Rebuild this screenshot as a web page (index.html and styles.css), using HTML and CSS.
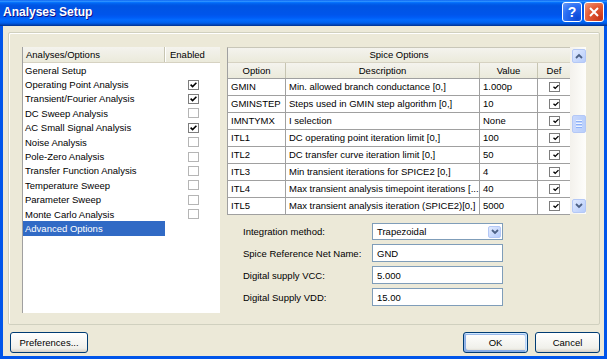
FILE: index.html
```html
<!DOCTYPE html>
<html>
<head>
    <meta charset="utf-8">
    <title>Analyses Setup</title>
    <link rel="stylesheet" href="styles.css">
</head>
<body>
<div class="window">
    <div class="titlebar">
        <span class="title">Analyses Setup</span>
        <div class="title-buttons">
            <span class="tbtn help">?</span>
            <span class="tbtn close">
                <svg width="10" height="10" viewBox="0 0 10 10"><path d="M1 1 L9 9 M9 1 L1 9" stroke="#fff" stroke-width="2" fill="none"/></svg>
            </span>
        </div>
    </div>

    <div class="body">
        <div class="group">
            <div class="list">
                <div class="list-head">
                    <span class="name">Analyses/Options</span>
                    <span class="enabled">Enabled</span>
                </div>
                <div class="list-row"><span class="name">General Setup</span><span class="enabled"></span></div>
                <div class="list-row"><span class="name">Operating Point Analysis</span><span class="enabled"><span class="cb on"><svg width="7" height="6" viewBox="0 0 7 6"><path d="M0.6 2.6 L2.6 4.6 L6.4 0.8" stroke="#000" stroke-width="1.6" fill="none"/></svg></span></span></div>
                <div class="list-row"><span class="name">Transient/Fourier Analysis</span><span class="enabled"><span class="cb on"><svg width="7" height="6" viewBox="0 0 7 6"><path d="M0.6 2.6 L2.6 4.6 L6.4 0.8" stroke="#000" stroke-width="1.6" fill="none"/></svg></span></span></div>
                <div class="list-row"><span class="name">DC Sweep Analysis</span><span class="enabled"><span class="cb"></span></span></div>
                <div class="list-row"><span class="name">AC Small Signal Analysis</span><span class="enabled"><span class="cb on"><svg width="7" height="6" viewBox="0 0 7 6"><path d="M0.6 2.6 L2.6 4.6 L6.4 0.8" stroke="#000" stroke-width="1.6" fill="none"/></svg></span></span></div>
                <div class="list-row"><span class="name">Noise Analysis</span><span class="enabled"><span class="cb"></span></span></div>
                <div class="list-row"><span class="name">Pole-Zero Analysis</span><span class="enabled"><span class="cb"></span></span></div>
                <div class="list-row"><span class="name">Transfer Function Analysis</span><span class="enabled"><span class="cb"></span></span></div>
                <div class="list-row"><span class="name">Temperature Sweep</span><span class="enabled"><span class="cb"></span></span></div>
                <div class="list-row"><span class="name">Parameter Sweep</span><span class="enabled"><span class="cb"></span></span></div>
                <div class="list-row"><span class="name">Monte Carlo Analysis</span><span class="enabled"><span class="cb"></span></span></div>
                <div class="list-row selected"><span class="name">Advanced Options</span><span class="enabled"></span></div>
            </div>

            <div class="right">
                <div class="grid-wrap">
                    <div class="grid">
                        <div class="grid-title">Spice Options</div>
                        <div class="grid-head">
                            <span class="c-opt">Option</span>
                            <span class="c-desc">Description</span>
                            <span class="c-val">Value</span>
                            <span class="c-def">Def</span>
                        </div>
                        <div class="grid-row">
                            <span class="c-opt">GMIN</span>
                            <span class="c-desc">Min. allowed branch conductance [0,]</span>
                            <span class="c-val">1.000p</span>
                            <span class="c-def"><span class="cb on"><svg width="7" height="6" viewBox="0 0 7 6"><path d="M0.6 2.6 L2.6 4.6 L6.4 0.8" stroke="#000" stroke-width="1.6" fill="none"/></svg></span></span>
                        </div>
                        <div class="grid-row">
                            <span class="c-opt">GMINSTEP</span>
                            <span class="c-desc">Steps used in GMIN step algorithm [0,]</span>
                            <span class="c-val">10</span>
                            <span class="c-def"><span class="cb on"><svg width="7" height="6" viewBox="0 0 7 6"><path d="M0.6 2.6 L2.6 4.6 L6.4 0.8" stroke="#000" stroke-width="1.6" fill="none"/></svg></span></span>
                        </div>
                        <div class="grid-row">
                            <span class="c-opt">IMNTYMX</span>
                            <span class="c-desc">I selection</span>
                            <span class="c-val">None</span>
                            <span class="c-def"><span class="cb on"><svg width="7" height="6" viewBox="0 0 7 6"><path d="M0.6 2.6 L2.6 4.6 L6.4 0.8" stroke="#000" stroke-width="1.6" fill="none"/></svg></span></span>
                        </div>
                        <div class="grid-row">
                            <span class="c-opt">ITL1</span>
                            <span class="c-desc">DC operating point iteration limit [0,]</span>
                            <span class="c-val">100</span>
                            <span class="c-def"><span class="cb on"><svg width="7" height="6" viewBox="0 0 7 6"><path d="M0.6 2.6 L2.6 4.6 L6.4 0.8" stroke="#000" stroke-width="1.6" fill="none"/></svg></span></span>
                        </div>
                        <div class="grid-row">
                            <span class="c-opt">ITL2</span>
                            <span class="c-desc">DC transfer curve iteration limit [0,]</span>
                            <span class="c-val">50</span>
                            <span class="c-def"><span class="cb on"><svg width="7" height="6" viewBox="0 0 7 6"><path d="M0.6 2.6 L2.6 4.6 L6.4 0.8" stroke="#000" stroke-width="1.6" fill="none"/></svg></span></span>
                        </div>
                        <div class="grid-row">
                            <span class="c-opt">ITL3</span>
                            <span class="c-desc">Min transient iterations for SPICE2 [0,]</span>
                            <span class="c-val">4</span>
                            <span class="c-def"><span class="cb on"><svg width="7" height="6" viewBox="0 0 7 6"><path d="M0.6 2.6 L2.6 4.6 L6.4 0.8" stroke="#000" stroke-width="1.6" fill="none"/></svg></span></span>
                        </div>
                        <div class="grid-row">
                            <span class="c-opt">ITL4</span>
                            <span class="c-desc">Max transient analysis timepoint iterations [...</span>
                            <span class="c-val">40</span>
                            <span class="c-def"><span class="cb on"><svg width="7" height="6" viewBox="0 0 7 6"><path d="M0.6 2.6 L2.6 4.6 L6.4 0.8" stroke="#000" stroke-width="1.6" fill="none"/></svg></span></span>
                        </div>
                        <div class="grid-row">
                            <span class="c-opt">ITL5</span>
                            <span class="c-desc">Max transient analysis iteration (SPICE2)[0,]</span>
                            <span class="c-val">5000</span>
                            <span class="c-def"><span class="cb on"><svg width="7" height="6" viewBox="0 0 7 6"><path d="M0.6 2.6 L2.6 4.6 L6.4 0.8" stroke="#000" stroke-width="1.6" fill="none"/></svg></span></span>
                        </div>
                    </div>
                    <div class="vscroll">
                        <span class="sbtn"><svg width="8" height="6" viewBox="0 0 8 6"><path d="M1 5 L4 2 L7 5" stroke="#4d6185" stroke-width="1.8" fill="none"/></svg></span>
                        <div class="track">
                            <span class="thumb"><i></i><i></i><i></i></span>
                        </div>
                        <span class="sbtn"><svg width="8" height="6" viewBox="0 0 8 6"><path d="M1 1 L4 4 L7 1" stroke="#4d6185" stroke-width="1.8" fill="none"/></svg></span>
                    </div>
                </div>

                <div class="form">
                    <span class="label">Integration method:</span>
                    <div class="select">
                        <span>Trapezoidal</span>
                        <span class="drop"><svg width="8" height="6" viewBox="0 0 8 6"><path d="M1 1 L4 4 L7 1" stroke="#4d6185" stroke-width="1.8" fill="none"/></svg></span>
                    </div>
                    <span class="label">Spice Reference Net Name:</span>
                    <div class="input">GND</div>
                    <span class="label">Digital supply VCC:</span>
                    <div class="input">5.000</div>
                    <span class="label">Digital Supply VDD:</span>
                    <div class="input">15.00</div>
                </div>
            </div>
        </div>

        <div class="buttons">
            <button class="btn pref">Preferences...</button>
            <span class="spacer"></span>
            <button class="btn default">OK</button>
            <button class="btn">Cancel</button>
        </div>
    </div>
</div>
</body>
</html>
```

FILE: styles.css
```css
body {
    margin: 0;
    background-color: #ece9d8;
    font-family: "Liberation Sans", Arial, sans-serif;
    font-size: 9.5px;
    color: black;
}

.window {
    width: 607px;
    height: 359px;
    display: flex;
    flex-direction: column;
}

/* title bar */
.titlebar {
    height: 26px;
    flex: none;
    display: flex;
    align-items: flex-start;
    justify-content: space-between;
    padding: 0 3px 0 3px;
    box-sizing: border-box;
    background: linear-gradient(to bottom, #0058ee 0%, #3593ff 4%, #288eff 6%, #127dff 8%, #036ffc 10%, #0262ee 14%, #0057e5 20%, #0054e3 24%, #0055eb 56%, #005bf5 66%, #026afe 76%, #0062ef 86%, #0052d6 92%, #0040ab 96%, #003092 100%);
}

.title {
    color: white;
    font-weight: bold;
    font-size: 12px;
    line-height: 25px;
    text-shadow: 1px 1px #0f1089;
}

.title-buttons {
    display: flex;
    gap: 2px;
    padding-top: 2px;
}

.tbtn {
    width: 20px;
    height: 20px;
    box-sizing: border-box;
    border: 1px solid white;
    border-radius: 3px;
    display: flex;
    align-items: center;
    justify-content: center;
    color: white;
    font-weight: bold;
    font-size: 14px;
}

.help {
    background: radial-gradient(circle at 80% 85%, #0a48d6 0%, #2c6ff4 60%, #6a9cf8 100%);
}

.close {
    background: radial-gradient(circle at 85% 85%, #c7361a 0%, #e35a34 55%, #f0987c 100%);
}

/* dialog body */
.body {
    flex: 1;
    display: flex;
    flex-direction: column;
    border: 3px solid #0055ea;
    border-top: none;
    background-color: #ece9d8;
}

.group {
    height: 293px;
    margin: 6px 4px 0 5px;
    box-sizing: border-box;
    border: 1px solid #d0d0bf;
    border-radius: 2px;
    box-shadow: inset 1px 1px 0 white;
    display: flex;
    gap: 7px;
    padding: 14px 13px 11px 13px;
}

/* analyses list */
.list {
    width: 198px;
    flex: none;
    background-color: white;
    border-left: 1px solid #a0a0a0;
    box-sizing: border-box;
}

.list-head {
    height: 16px;
    display: flex;
    box-sizing: border-box;
    background: linear-gradient(to bottom, #f4f3ee, #ebeadb);
    border-bottom: 1px solid #d6d2c2;
    line-height: 15px;
}

.list-head .name {
    width: 142px;
    padding-left: 3px;
    box-sizing: border-box;
    border-right: 1px solid #c7c5b2;
}

.list-head .enabled {
    padding-left: 4px;
    border-left: 1px solid white;
}

.list-row {
    height: 14.4px;
    display: flex;
    align-items: center;
}

.list-row .name {
    width: 142px;
    height: 100%;
    padding-left: 2px;
    box-sizing: border-box;
    display: flex;
    align-items: center;
}

.list-row .enabled {
    flex: 1;
    display: flex;
    justify-content: center;
    padding-left: 1px;
}

.list-row.selected .name {
    background-color: #316ac5;
    color: white;
}

.cb {
    width: 11px;
    height: 10px;
    box-sizing: border-box;
    border: 1px solid #b5b5b5;
    background-color: white;
    display: flex;
    align-items: center;
    justify-content: center;
}

.cb.on {
    border-color: #7d7d7d;
}

/* spice options grid */
.right {
    flex: 1;
    display: flex;
    flex-direction: column;
}

.grid-wrap {
    display: flex;
}

.grid {
    width: 343px;
    border-left: 1px solid #a0a0a0;
    border-top: 1px solid #c8c6b8;
    box-sizing: border-box;
    background-color: white;
}

.grid-title {
    height: 15px;
    line-height: 14px;
    text-align: center;
    background: linear-gradient(to bottom, #f4f3ee, #ebeadb);
    border-bottom: 1px solid #d6d2c2;
    box-sizing: border-box;
}

.grid-head,
.grid-row {
    display: flex;
}

.grid-head {
    height: 16px;
    line-height: 15px;
    background: linear-gradient(to bottom, #f4f3ee, #ebeadb);
    border-bottom: 1px solid #a0a0a0;
    box-sizing: border-box;
}

.grid-head span {
    text-align: center;
    box-sizing: border-box;
    border-right: 1px solid #c7c5b2;
}

.grid-row {
    height: 17px;
}

.grid-row span {
    box-sizing: border-box;
    border-right: 1px solid #a0a0a0;
    border-bottom: 1px solid #a0a0a0;
    padding-left: 3px;
    line-height: 16px;
    white-space: nowrap;
    overflow: hidden;
}

.c-opt { width: 58px; }
.c-desc { width: 194px; }
.c-val { width: 58px; }
.c-def { width: 32px; }

.grid-row .c-def {
    padding-left: 0;
    display: flex;
    align-items: center;
    justify-content: center;
}

.grid-head .c-def,
.grid-row .c-def {
    border-right: none;
}

.vscroll {
    width: 16px;
    height: 167px;
    box-sizing: border-box;
    padding: 2px 0 1px 2px;
    background: linear-gradient(to right, #f3f1ec, #fefefb);
    display: flex;
    flex-direction: column;
}

.sbtn {
    height: 14px;
    flex: none;
    box-sizing: border-box;
    border: 1px solid #b4c8f6;
    border-radius: 2px;
    background: linear-gradient(to bottom right, #e1eafe, #b6ccfb);
    display: flex;
    align-items: center;
    justify-content: center;
}

.track {
    flex: 1;
    padding-top: 52px;
}

.thumb {
    height: 18px;
    box-sizing: border-box;
    border: 1px solid #b4c8f6;
    border-radius: 2px;
    background: linear-gradient(to right, #c9d8fc, #b8cffb);
    display: flex;
    flex-direction: column;
    align-items: center;
    justify-content: center;
    gap: 1px;
}

.thumb i {
    width: 6px;
    height: 1px;
    background-color: #eef4fe;
    border-bottom: 1px solid #8cb0f8;
}

/* form */
.form {
    display: grid;
    grid-template-columns: 129px 131px;
    grid-template-rows: 17px 18px 18px 18px;
    row-gap: 4px;
    margin-top: 8px;
    padding-left: 16px;
    align-items: center;
}

.select,
.input {
    height: 100%;
    box-sizing: border-box;
    border: 1px solid #7f9db9;
    background-color: white;
    padding-left: 4px;
    display: flex;
    align-items: center;
}

.select {
    justify-content: space-between;
    padding-right: 1px;
}

.drop {
    width: 13px;
    height: 12px;
    box-sizing: border-box;
    border: 1px solid #b4c8f6;
    border-radius: 2px;
    background: linear-gradient(to bottom right, #e1eafe, #b6ccfb);
    display: flex;
    align-items: center;
    justify-content: center;
}

/* bottom buttons */
.buttons {
    display: flex;
    gap: 7px;
    margin: 7px 4px 0 7px;
}

.spacer {
    flex: 1;
}

.btn {
    height: 21px;
    width: 65px;
    font-family: "Liberation Sans", Arial, sans-serif;
    font-size: 9.5px;
    color: black;
    border: 1px solid #003c74;
    border-radius: 3px;
    background: linear-gradient(to bottom, #ffffff, #f0f0ea 80%, #d6d0c5);
    padding: 0;
}

.btn.pref {
    width: 78px;
}

.btn.default {
    box-shadow: inset -1px 1px #cee7ff, inset 1px 2px #98b8ea, inset -2px 2px #bcd4f6, inset 1px -1px #89ade4, inset 2px -2px #89ade4;
}
```
